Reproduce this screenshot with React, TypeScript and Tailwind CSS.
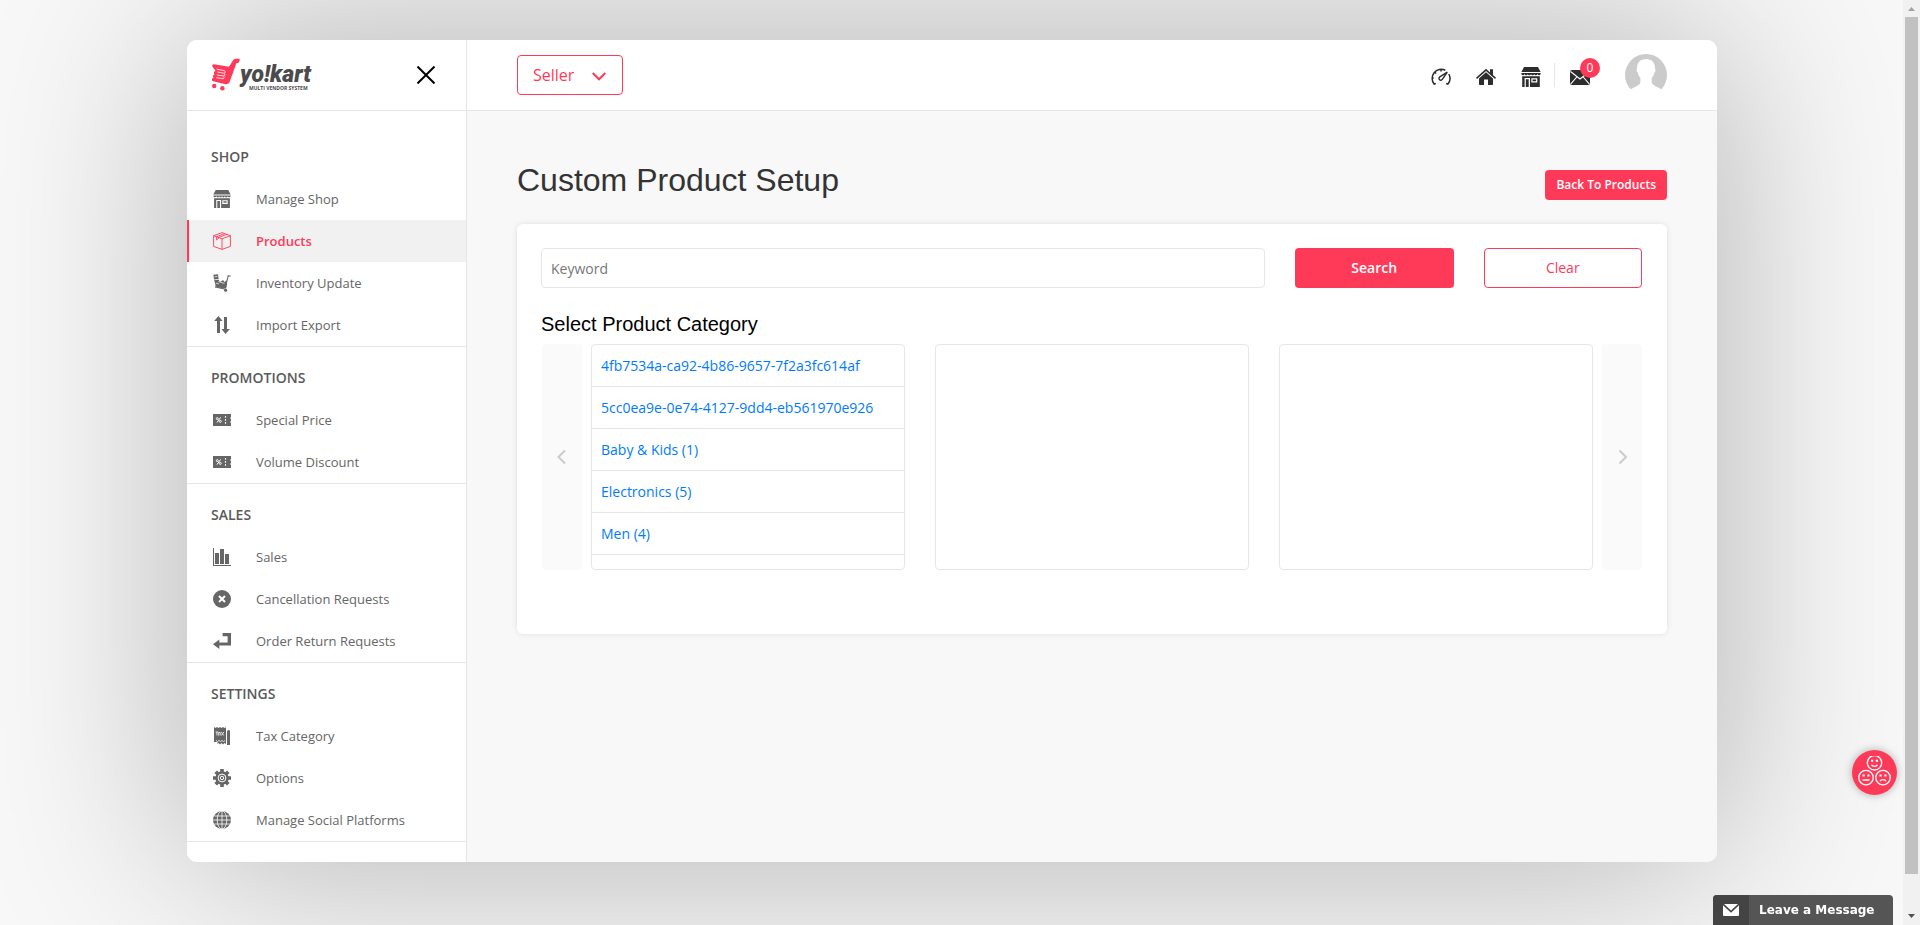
import React from "react";

const ICON = "h-[18px] w-[18px] shrink-0";

function StoreIcon({ className }: { className: string }) {
  return (
    <svg viewBox="0 0 20 20" className={className} fill="currentColor" aria-hidden="true">
      <path d="M3 0h14l2.600 5H.4z" />
      <path d="M.4 6h19.200v.4a1.600 1.600 0 0 1-3.200.3 1.600 1.600 0 0 1-3.200 0 1.600 1.600 0 0 1-3.200 0 1.600 1.600 0 0 1-3.200 0 1.600 1.600 0 0 1-3.200 0A1.600 1.600 0 0 1 .4 6.400z" />
      <path fillRule="evenodd" d="M1.200 9.300h17.600V20H9v-9H3.600v9H1.200zM10.300 11.300v4.200h6v-4.200z" />
      <path d="M4.800 12.200h2.900V20H4.800zM11.500 12.500h3.600v1.800h-3.600z" />
    </svg>
  );
}

function BoxIcon() {
  return (
    <svg viewBox="0 0 18 18" className={ICON} fill="none" stroke="currentColor" strokeWidth=".9" strokeLinejoin="round" aria-hidden="true">
      <path d="M9 .6l8.400 3.100v10.700L9 17.400.6 14.400V3.700zM.6 3.700L9 6.800l8.400-3.100M9 6.800v10.600" />
      <path d="M3.600 4.900v3l1.800-1.400v-1L13.700 2.400M3.600 4.700L11.500 1.600" />
    </svg>
  );
}

function TrolleyIcon() {
  return (
    <svg viewBox="0 0 18 18" className={ICON} fill="currentColor" aria-hidden="true">
      <path d="M.4.800L5 .2l.6 4.800-4.600.6zM1 6.200l4.800-.5 1 2.400L10.200 6l1.200 2.200 1.800-2 1 3.800-1.200 4.400-4.800-.4-5.600-1.400-.4-3.200z" />
      <path d="M17.600 2.200l-2.400-.5-2.800 12M2 12.900l9.600 2.100" fill="none" stroke="currentColor" strokeWidth="1.100" />
      <circle cx="12.600" cy="16.200" r="1.600" />
      <path d="M1.600 2.800l2.800-.4M3 9.200l3 .8M5.400 7.600l6 1.800" stroke="#fff" strokeWidth=".7" />
    </svg>
  );
}

function ArrowsIcon() {
  return (
    <svg viewBox="0 0 18 18" className={ICON} fill="currentColor" aria-hidden="true">
      <path d="M5.400 0l4.200 5H7v12H4V5H1.200zM12.600 18l-4.200-5H11V1h3v12h2.800z" />
    </svg>
  );
}

function TicketIcon() {
  return (
    <svg viewBox="0 0 18 18" className={ICON} aria-hidden="true">
      <path d="M0 3h18v3.400h-1v1.200h1v2.800h-1v1.200h1V15H0z" fill="currentColor" />
      <g fill="none" stroke="#fff" strokeWidth="1">
        <circle cx="4.300" cy="7.600" r="1" />
        <circle cx="7.300" cy="10.400" r="1" />
        <path d="M7.600 6.400l-3.600 5.200" />
        <path d="M12.500 5v8" strokeWidth="1.100" strokeDasharray="1.800 1.200" />
      </g>
    </svg>
  );
}

function BarsIcon() {
  return (
    <svg viewBox="0 0 18 18" className={ICON} fill="currentColor" aria-hidden="true">
      <path d="M0 0h1v17h17v1H0zM2 5h4v11H2zM7 1h4v15H7zM12 6h4v10h-4z" />
    </svg>
  );
}

function CancelIcon() {
  return (
    <svg viewBox="0 0 18 18" className={ICON} aria-hidden="true">
      <circle cx="9" cy="9" r="9" fill="currentColor" />
      <path d="M6 6l6 6M12 6l-6 6" stroke="#fff" strokeWidth="2" />
    </svg>
  );
}

function ReturnIcon() {
  return (
    <svg viewBox="0 0 18 18" className={ICON} fill="currentColor" aria-hidden="true">
      <path d="M9.600 1H18v12.600H6.300V17L0 12.200l6.300-4.600v3h8.300V4.200h-5z" />
    </svg>
  );
}

function TaxIcon() {
  return (
    <svg viewBox="0 0 18 18" className={ICON} aria-hidden="true">
      <path fill="currentColor" d="M1 0l1.500 1L4 0l1.500 1L7 0l1.500 1L10 0l1.500 1L13 .2V17l-1.500-1-1.500 1.600L8.500 16 7 17.600 5.500 16 4.500 17v-2H1zM14 4l1.500-1L17 3.500V18h-3z" />
      <path fill="none" stroke="#fff" strokeWidth=".8" d="M2.600 5h2.600M3.900 5v3.500M5.600 8.500v-3h1.600v3M8.300 5l2.400 3.500M10.800 5L8.400 8.500M3 13.500l1.500 1 1.500-1 1.500 1 1.500-1 1.500 1 1.500-1" />
    </svg>
  );
}

function GearIcon() {
  return (
    <svg viewBox="0 0 18 18" className={ICON} aria-hidden="true">
      <g fill="currentColor">
        <circle cx="9" cy="9" r="6.700" />
        <path d="M7.200 0h3.600v18H7.200zM0 7.200h18v3.600H0z" />
        <path d="M1.400 4L4 1.400 16.600 14 14 16.600zM14 1.400L16.600 4 4 16.600 1.400 14z" />
      </g>
      <circle cx="9" cy="9" r="3.900" fill="none" stroke="#fff" strokeWidth="1" />
      <circle cx="9" cy="9" r="1.700" fill="none" stroke="#fff" strokeWidth="1" />
    </svg>
  );
}

function GlobeIcon() {
  return (
    <svg viewBox="0 0 18 18" className={ICON} aria-hidden="true">
      <circle cx="9" cy="9" r="9" fill="currentColor" />
      <g fill="none" stroke="#fff" strokeWidth=".8">
        <ellipse cx="9" cy="9" rx="4.800" ry="9" />
        <path d="M9 0v18M0 9h18M1.300 5h15.400M1.300 13h15.400" />
      </g>
    </svg>
  );
}

function Logo() {
  return (
    <svg width="104" height="34" viewBox="0 0 104 34" className="overflow-visible" role="img" aria-label="yo!kart multi vendor system">
      <path fill="#ff3a59" d="M1.500 8.800c-.8-1.200 0-2.800 1.500-2.600l15 2.600L21.600 3c.8-1.600 2-2.200 3.600-2.200h2.600c.8 0 1.200.6 1 1.300l-1 2.200c-.2.500-.6.700-1.200.7-.8 0-1.200.3-1.500 1.100l-6.300 17.400c-.7 2-2.200 3-4.300 2.700L2.300 23.300c-1.200-.2-1.700-1.400-1.300-2.500.4-.8 1-1 1.900-.8-1-.6-1.400-1.600-.8-2.600.4-.8 1.100-1 1.900-.8-1.100-.6-1.400-1.700-.9-2.700.3-.7 1-.9 1.600-.8z" />
      <g fill="none" stroke="#fff" strokeWidth=".8" strokeLinecap="round" strokeLinejoin="round">
        <path d="M6 11.200l7.500 1.600c1.200.3 1 2.600-.4 2.500L6.500 14M13.200 15.500c1.200.3.800 2.700-.5 2.500l-6.500-1M12.500 18.200c1.300.4.800 2.700-.5 2.500l-6.500-1" />
      </g>
      <circle cx="3.200" cy="28" r="2.200" fill="#ff3a59" />
      <circle cx="11.400" cy="30.200" r="2.200" fill="#ff3a59" />
      <text x="29" y="24" fill="#4b4b4d" className="font-['Roboto',sans-serif] text-[23px] font-black italic">yo!kart</text>
      <text x="38" y="32" fill="#4b4b4d" className="font-['Open_Sans',sans-serif] text-[5px] font-bold">MULTI VENDOR SYSTEM</text>
    </svg>
  );
}

type Item = { label: string; icon: React.ReactNode; active?: boolean };

const groups: { title: string; items: Item[] }[] = [
  {
    title: "SHOP",
    items: [
      { label: "Manage Shop", icon: <StoreIcon className={ICON} /> },
      { label: "Products", icon: <BoxIcon />, active: true },
      { label: "Inventory Update", icon: <TrolleyIcon /> },
      { label: "Import Export", icon: <ArrowsIcon /> },
    ],
  },
  {
    title: "PROMOTIONS",
    items: [
      { label: "Special Price", icon: <TicketIcon /> },
      { label: "Volume Discount", icon: <TicketIcon /> },
    ],
  },
  {
    title: "SALES",
    items: [
      { label: "Sales", icon: <BarsIcon /> },
      { label: "Cancellation Requests", icon: <CancelIcon /> },
      { label: "Order Return Requests", icon: <ReturnIcon /> },
    ],
  },
  {
    title: "SETTINGS",
    items: [
      { label: "Tax Category", icon: <TaxIcon /> },
      { label: "Options", icon: <GearIcon /> },
      { label: "Manage Social Platforms", icon: <GlobeIcon /> },
    ],
  },
];

const categories = [
  "4fb7534a-ca92-4b86-9657-7f2a3fc614af",
  "5cc0ea9e-0e74-4127-9dd4-eb561970e926",
  "Baby & Kids (1)",
  "Electronics (5)",
  "Men (4)",
];

function Sidebar() {
  return (
    <aside className="w-[280px] shrink-0 border-r border-[#e6e6e6] bg-white pb-5">
      <div className="flex h-[71px] items-center justify-between border-b border-[#e6e6e6] pr-[31px] pl-6">
        <a href="#home">
          <Logo />
        </a>
        <button type="button" aria-label="Close menu" className="text-black">
          <svg width="18" height="18" viewBox="0 0 18 18" stroke="currentColor" strokeWidth="2" aria-hidden="true">
            <path d="M.5.5l17 17M17.500.5l-17 17" />
          </svg>
        </button>
      </div>
      <nav className="pt-[15px]">
        {groups.map((g) => (
          <div key={g.title} className="border-b border-[#e6e6e6] pt-[10px]">
            <h2 className="flex h-[42px] items-center pl-6 text-sm font-semibold text-[#5a5a5a]">{g.title}</h2>
            <ul>
              {g.items.map((it) => (
                <li key={it.label}>
                  <a
                    href="#menu"
                    className={
                      it.active
                        ? "flex h-[42px] items-center gap-[25px] border-l-2 border-[#ff3a59] bg-[#f1f1f1] pl-6 text-[13px] font-semibold text-[#ff3a59]"
                        : "flex h-[42px] items-center gap-[25px] border-l-2 border-transparent pl-6 text-[13px] text-[#666]"
                    }
                  >
                    {it.icon}
                    {it.label}
                  </a>
                </li>
              ))}
            </ul>
          </div>
        ))}
      </nav>
    </aside>
  );
}

function TopBar() {
  return (
    <header className="flex h-[71px] shrink-0 items-center justify-between border-b border-[#e6e6e6] bg-white px-[50px]">
      <div className="relative text-[#ff3a59]">
        <select aria-label="Account type" className="h-10 w-[106px] appearance-none rounded border border-[#ff3a59] bg-white pl-[15px] text-base">
          <option>Seller</option>
        </select>
        <svg className="pointer-events-none absolute top-[17px] right-[17px]" width="14" height="9" viewBox="0 0 14 9" fill="none" stroke="currentColor" strokeWidth="2" aria-hidden="true">
          <path d="M.7 1L7 7.300 13.300 1" />
        </svg>
      </div>
      <div className="flex items-center text-[#2d2d2d]">
        <nav className="flex items-center gap-[25px] pt-[4px]">
          <a href="#dashboard" aria-label="Dashboard">
            <svg width="20" height="20" viewBox="0 0 20 20" fill="none" stroke="currentColor" strokeWidth="1.500" aria-hidden="true">
              <path d="M3.200 17.300A9.200 9.200 0 0 1 14.300 3.200M17.800 7a9.200 9.200 0 0 1-1 10.300M10 2.200v2.300M3.800 5.200l1.300 1.300M.9 11h1.800M3.200 17.300l1.600-.9M16.800 17.300l-1.600-.9" />
              <path d="M16.300 5.200L8.800 9.900a1.800 1.800 0 1 0 2.500 2.500z" strokeWidth="1.400" />
            </svg>
          </a>
          <a href="#home" aria-label="Home">
            <svg width="20" height="20" viewBox="0 0 20 20" fill="currentColor" aria-hidden="true">
              <path d="M10 1.800l4 3.600V2.200h3v5.900l3 2.700-1 1.200-9-8.100L1 12 0 10.800z" />
              <path d="M10 5.300l7 6.200V17c0 .6-.4 1-1 1h-4v-5.500H8V18H4c-.6 0-1-.4-1-1v-5.500z" />
            </svg>
          </a>
          <a href="#shop" aria-label="Shop">
            <StoreIcon className="h-5 w-5" />
          </a>
        </nav>
        <div className="ml-[13px] flex h-6 items-center border-l border-[#e6e6e6] pl-[15px]">
          <a href="#messages" aria-label="Messages" className="relative block pt-[4px]">
            <svg width="20" height="15" viewBox="0 0 20 15" aria-hidden="true">
              <path d="M2 0h16a2 2 0 0 1 2 2v11a2 2 0 0 1-2 2H2a2 2 0 0 1-2-2V2a2 2 0 0 1 2-2z" fill="currentColor" />
              <path d="M.5 1.500L10 9l9.500-7.500M.8 13.800l6-6.800M19.200 13.800l-6-6.800" fill="none" stroke="#fff" strokeWidth="1.100" />
            </svg>
            <span className="absolute -top-2 left-[10px] flex h-5 w-5 items-center justify-center rounded-full bg-[#ff3a59] text-xs text-white">0</span>
          </a>
        </div>
        <button type="button" aria-label="Profile" className="ml-[35px]">
          <svg width="42" height="42" viewBox="0 0 42 42" aria-hidden="true">
            <circle cx="21" cy="21" r="21" fill="#cbcbcb" />
            <path fill="#fff" d="M21 5c6 0 9.300 4 9 9.500.8.600.6 3.300-.7 4.300-.4 2.600-1.600 4.200-2.600 5.200v4c0 3 4.200 4.200 9.800 7.300V42h-31v-6.700C11.200 32.200 15.400 31 15.400 28v-4c-1-1-2.200-2.600-2.600-5.200-1.300-1-1.500-3.700-.7-4.300C11.800 9 15 5 21 5z" />
          </svg>
        </button>
      </div>
    </header>
  );
}

function NavStrip({ label, d }: { label: string; d: string }) {
  return (
    <button type="button" aria-label={label} className="flex w-10 shrink-0 items-center justify-center rounded-sm bg-[#fafafa] text-[#ccc]">
      <svg width="10" height="16" viewBox="0 0 10 16" fill="none" stroke="currentColor" strokeWidth="2" aria-hidden="true">
        <path d={d} />
      </svg>
    </button>
  );
}

export default function App() {
  return (
    <div className="min-h-screen overflow-hidden bg-[#f8f8f8] pt-10 pr-[203px] pb-[63px] pl-[187px] font-['Open_Sans',sans-serif] text-sm">
      <div className="rounded-[10px] shadow-[0_0_200px_rgba(0,0,0,0.3)]">
        <div className="flex overflow-hidden rounded-[10px] bg-[#f8f8f8]">
          <Sidebar />
          <div className="flex min-w-0 flex-1 flex-col">
            <TopBar />
            <main className="px-[50px] pt-[49px]">
              <div className="flex items-end justify-between">
                <h1 className="font-['Liberation_Sans',Arial,sans-serif] text-[32px] leading-10 text-[#333]">Custom Product Setup</h1>
                <a href="#products" className="flex h-[30px] items-center rounded bg-[#ff3a59] px-[11px] text-xs font-semibold text-white">
                  Back To Products
                </a>
              </div>
              <section className="mt-6 h-[410px] rounded-md bg-white py-6 pr-[25px] pl-6 shadow-[0_0_6px_rgba(0,0,0,0.1)]">
                <form className="grid grid-cols-12 gap-[30px]">
                  <input
                    type="text"
                    aria-label="Keyword"
                    placeholder="Keyword"
                    className="col-span-8 h-10 rounded border border-[#e6e6e6] px-[9px] text-sm placeholder:text-[#777]"
                  />
                  <button type="button" className="col-span-2 h-10 rounded bg-[#ff3a59] text-sm font-semibold text-white">
                    Search
                  </button>
                  <button type="button" className="col-span-2 h-10 rounded border border-[#ff3a59] text-sm text-[#ff3a59]">
                    Clear
                  </button>
                </form>
                <h2 className="mt-[22px] font-['Liberation_Sans',Arial,sans-serif] text-xl leading-7 text-black">Select Product Category</h2>
                <div className="mt-[6px] flex h-[226px] gap-[9px] pl-px">
                  <NavStrip label="Previous" d="M8 1.500L1.500 8 8 14.500" />
                  <div className="grid min-w-0 flex-1 grid-cols-3 gap-[30px]">
                    <ul className="overflow-hidden rounded border border-[#e6e6e6]">
                      {categories.map((c) => (
                        <li key={c} className="border-b border-[#e6e6e6]">
                          <a href="#category" className="block px-[9px] text-sm leading-[41px] text-[#007bff]">
                            {c}
                          </a>
                        </li>
                      ))}
                    </ul>
                    <div className="rounded border border-[#e6e6e6]" />
                    <div className="rounded border border-[#e6e6e6]" />
                  </div>
                  <NavStrip label="Next" d="M2.500 1.500L9 8l-6.500 6.500" />
                </div>
              </section>
            </main>
          </div>
        </div>
      </div>

      <button
        type="button"
        aria-label="Feedback"
        className="fixed right-[23px] bottom-[130px] flex h-[45px] w-[45px] items-center justify-center rounded-full bg-[#ff3a59] shadow-[0_0_8px_rgba(0,0,0,0.3)]"
      >
        <svg width="33" height="33" viewBox="0 0 33 33" fill="none" stroke="#fff" strokeWidth="1.300" aria-hidden="true">
          <circle cx="16.500" cy="6.800" r="7.200" />
          <circle cx="8" cy="21.600" r="7.200" />
          <circle cx="25" cy="21.600" r="7.200" />
          <path d="M13.500 8.800c1 2 5 2 6 0M4.500 24h7M22 25.200c1-2 5-2 6 0" />
          <path d="M13 4.800h2.200M17.800 4.800H20M4.500 19.500h2.200M9.300 19.500h2.200M21.500 19.500h2.200M26.300 19.500h2.200" strokeWidth="2" />
        </svg>
      </button>

      <button
        type="button"
        className="fixed right-[27px] bottom-0 flex h-[30px] w-[180px] items-stretch overflow-hidden rounded-t bg-[#555] font-['DejaVu_Sans',sans-serif] text-xs font-bold text-white"
      >
        <span className="flex w-9 items-center justify-center bg-[#444]">
          <svg width="16" height="12" viewBox="0 0 16 12" aria-hidden="true">
            <path d="M1 0h14l-7 6.500z" fill="#fff" />
            <path d="M0 1.200L8 8.800l8-7.600V11a1 1 0 0 1-1 1H1a1 1 0 0 1-1-1z" fill="#fff" />
          </svg>
        </span>
        <span className="flex flex-1 items-center pl-[10px]">Leave a Message</span>
      </button>

      <div className="fixed inset-y-0 right-0 flex w-[17px] flex-col items-center justify-between bg-[#f1f1f1]">
        <svg width="17" height="17" viewBox="0 0 17 17" aria-hidden="true">
          <path d="M5 11l3.500-4L12 11z" fill="#a3a3a3" />
        </svg>
        <div className="mb-[34px] w-[13px] flex-1 bg-[#c1c1c1]" />
        <svg className="text-[#505050]" width="17" height="17" viewBox="0 0 17 17" aria-hidden="true">
          <path d="M5 6l3.500 4L12 6z" fill="currentColor" />
        </svg>
      </div>
    </div>
  );
}
